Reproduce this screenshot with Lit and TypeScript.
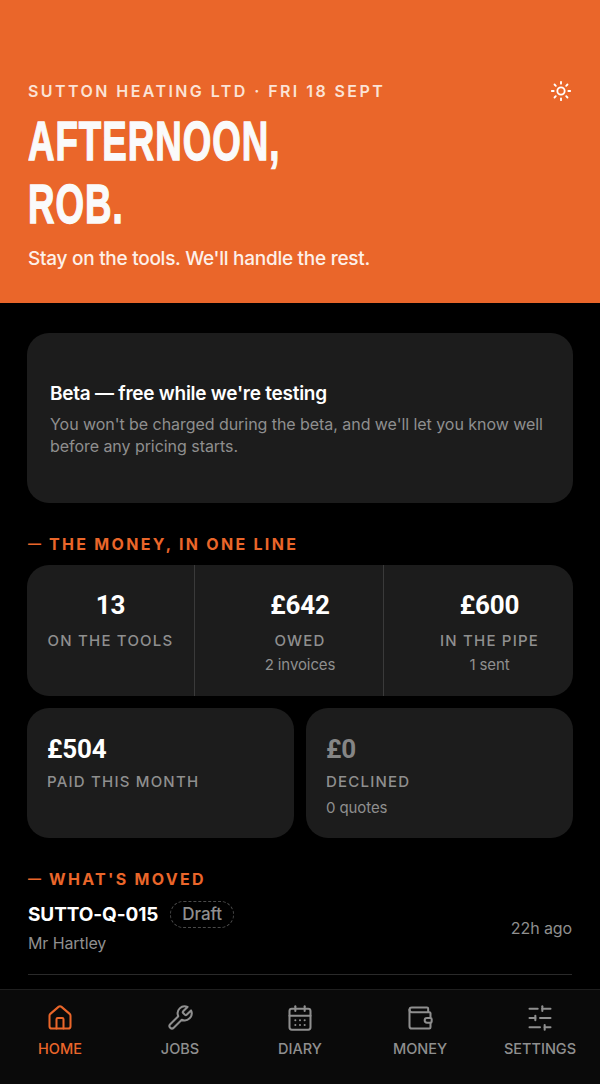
import { LitElement, html, css, svg } from "lit";
import { customElement } from "lit/decorators.js";

const icon = (p: unknown) => html`<svg class="ic" viewBox="0 0 24 24" fill="none" stroke="currentColor" stroke-width="2" stroke-linecap="round" stroke-linejoin="round">${p}</svg>`;

const home = svg`<path d="M15 21v-8a1 1 0 0 0-1-1h-4a1 1 0 0 0-1 1v8"/><path d="M3 10a2 2 0 0 1 .71-1.53l7-6a2 2 0 0 1 2.58 0l7 6A2 2 0 0 1 21 10v9a2 2 0 0 1-2 2H5a2 2 0 0 1-2-2z"/>`;
const wrench = svg`<path d="M14.7 6.3a1 1 0 0 0 0 1.4l1.6 1.6a1 1 0 0 0 1.4 0l3.77-3.77a6 6 0 0 1-7.94 7.94l-6.91 6.91a2.12 2.12 0 0 1-3-3l6.91-6.91a6 6 0 0 1 7.94-7.94l-3.76 3.76z"/>`;
const cal = svg`<path d="M8 2v4"/><path d="M16 2v4"/><rect width="18" height="18" x="3" y="4" rx="2"/><path d="M3 10h18"/><path d="M8 14h.01"/><path d="M12 14h.01"/><path d="M16 14h.01"/><path d="M8 18h.01"/><path d="M12 18h.01"/><path d="M16 18h.01"/>`;
const wallet = svg`<path d="M19 7V4a1 1 0 0 0-1-1H5a2 2 0 0 0 0 4h15a1 1 0 0 1 1 1v4h-3a2 2 0 0 0 0 4h3a1 1 0 0 0 1-1v-2a1 1 0 0 0-1-1"/><path d="M3 5v14a2 2 0 0 0 2 2h15a1 1 0 0 0 1-1v-4"/>`;
const sliders = svg`<line x1="21" x2="14" y1="4" y2="4"/><line x1="10" x2="3" y1="4" y2="4"/><line x1="21" x2="12" y1="12" y2="12"/><line x1="8" x2="3" y1="12" y2="12"/><line x1="21" x2="16" y1="20" y2="20"/><line x1="12" x2="3" y1="20" y2="20"/><line x1="14" x2="14" y1="2" y2="6"/><line x1="8" x2="8" y1="10" y2="14"/><line x1="16" x2="16" y1="18" y2="22"/>`;
const sun = svg`<circle cx="12" cy="12" r="4"/><path d="M12 2v2"/><path d="M12 20v2"/><path d="m4.93 4.93 1.41 1.41"/><path d="m17.66 17.66 1.41 1.41"/><path d="M2 12h2"/><path d="M20 12h2"/><path d="m6.34 17.66-1.41 1.41"/><path d="m19.07 4.93-1.41 1.41"/>`;

@customElement("app-root")
export class AppRoot extends LitElement {
  static styles = css`
    :host { display: block; width: 600px; height: 1084px; background: #000; overflow: hidden; position: relative; font-family: Inter, "Noto Sans", sans-serif; color: #fff; }
    .hero { background: #ea662a; height: 303px; box-sizing: border-box; padding: 80px 28px 0; }
    .top { display: flex; justify-content: space-between; align-items: center; height: 22px; }
    .eyebrow { font-size: 16px; font-weight: 600; letter-spacing: 2.43px; color: #fbe3d6; white-space: nowrap; }
    .sun { width: 22px; height: 22px; color: #fff; display: flex; }
    .sun .ic { width: 22px; height: 22px; }
    h1 { margin: 0; padding-top: 7px; font-family: "Liberation Sans", sans-serif; font-weight: 700; font-size: 56px; line-height: 63px; letter-spacing: 1.5px; color: #fafafa; transform: scaleX(.655); transform-origin: left; -webkit-text-stroke: 1.4px #fafafa; stroke-linejoin: miter; white-space: nowrap; }
    .sub { margin-top: 11px; font-size: 19px; line-height: 26px; font-weight: 500; color: #fdf0e9; letter-spacing: -.27px; }
    main { padding: 30px 27px 0 27px; }
    .card { background: #1c1c1c; border-radius: 22px; }
    .beta { height: 170px; box-sizing: border-box; padding: 48px 23px 0; }
    .beta h2 { margin: 0; font-size: 19px; line-height: 26px; font-weight: 600; letter-spacing: -.25px; }
    .beta p { margin: 6px 0 0; font-size: 16px; line-height: 22px; color: #8f8f8f; letter-spacing: -.05px; }
    .label { font-size: 16px; font-weight: 700; letter-spacing: 2.3px; color: #ea662a; line-height: 20px; padding-left: 1px; }
    .dash { font-size: 13px; line-height: 1; letter-spacing: 8px; vertical-align: 2px; }
    .l1 { margin-top: 31px; }
    .three { margin-top: 11px; height: 131px; display: grid; grid-template-columns: 167px 1fr 190px; }
    .cell { display: flex; flex-direction: column; align-items: center; padding-top: 24px; box-sizing: border-box; }
    .cell + .cell { border-left: 1px solid #3a3a3a; padding-left: 22px; }
    .num { font-family: Roboto, Inter, sans-serif; font-size: 26px; line-height: 32px; font-weight: 700; letter-spacing: -.2px; }
    .cap { margin-top: 10px; font-size: 15px; line-height: 20px; font-weight: 500; letter-spacing: 1.2px; color: #8f8f8f; }
    .note { margin-top: 4px; font-size: 15px; line-height: 20px; color: #8f8f8f; letter-spacing: -.1px; }
    .two { margin-top: 12px; display: grid; grid-template-columns: 1fr 1fr; gap: 12px; }
    .two .card { height: 130px; box-sizing: border-box; padding: 25px 20px 0; display: flex; flex-direction: column; align-items: flex-start; }
    .two .cap { margin-top: 7px; }
    .two .note { margin-top: 6px; }
    .dim { color: #858585; }
    .l2 { margin-top: 31px; }
    .row { margin: 12px 1px 0; height: 74px; box-sizing: border-box; border-bottom: 1px solid #2a2a2a; display: flex; justify-content: space-between; }
    .id { display: flex; align-items: center; gap: 12px; height: 27px; font-size: 19px; font-weight: 700; letter-spacing: -.1px; }
    .chip { font-size: 17px; font-weight: 500; color: #8f8f8f; border: 1px dashed #4a4a4a; border-radius: 14px; padding: 0 11px; line-height: 25px; }
    .who { margin-top: 4px; font-size: 16px; line-height: 22px; color: #8f8f8f; letter-spacing: -.1px; }
    .ago { font-size: 16px; color: #8f8f8f; line-height: 20px; margin-top: 17px; letter-spacing: -.1px; }
    nav { position: absolute; left: 0; right: 0; bottom: 0; height: 95px; box-sizing: border-box; background: #0a0a0a; border-top: 1px solid #1f1f1f; display: grid; grid-template-columns: repeat(5, 1fr); }
    .tab { display: flex; flex-direction: column; align-items: center; padding-top: 14px; color: #8f8f8f; font-size: 14.5px; font-weight: 500; }
    .tab .ic { width: 28px; height: 28px; stroke-width: 1.75; }
    .tab span { margin-top: 8px; line-height: 18px; }
    .on { color: #ea662a; }
  `;

  render() {
    const tabs: [string, unknown, boolean][] = [["HOME", home, true], ["JOBS", wrench, false], ["DIARY", cal, false], ["MONEY", wallet, false], ["SETTINGS", sliders, false]];
    return html`
      <section class="hero">
        <div class="top"><div class="eyebrow">SUTTON HEATING LTD · FRI 18 SEPT</div><div class="sun">${icon(sun)}</div></div>
        <h1>AFTERNOON,<br />ROB.</h1>
        <div class="sub">Stay on the tools. We'll handle the rest.</div>
      </section>
      <main>
        <div class="card beta">
          <h2>Beta — free while we're testing</h2>
          <p>You won't be charged during the beta, and we'll let you know well before any pricing starts.</p>
        </div>
        <div class="label l1"><span class="dash">—</span>THE MONEY, IN ONE LINE</div>
        <div class="card three">
          <div class="cell"><div class="num">13</div><div class="cap">ON THE TOOLS</div></div>
          <div class="cell"><div class="num">£642</div><div class="cap">OWED</div><div class="note">2 invoices</div></div>
          <div class="cell"><div class="num">£600</div><div class="cap">IN THE PIPE</div><div class="note">1 sent</div></div>
        </div>
        <div class="two">
          <div class="card"><div class="num">£504</div><div class="cap">PAID THIS MONTH</div></div>
          <div class="card"><div class="num dim">£0</div><div class="cap">DECLINED</div><div class="note">0 quotes</div></div>
        </div>
        <div class="label l2"><span class="dash">—</span>WHAT'S MOVED</div>
        <div class="row">
          <div>
            <div class="id">SUTTO-Q-015 <span class="chip">Draft</span></div>
            <div class="who">Mr Hartley</div>
          </div>
          <div class="ago">22h ago</div>
        </div>
      </main>
      <nav>
        ${tabs.map(([t, p, on]) => html`<div class="tab ${on ? "on" : ""}">${icon(p)}<span>${t}</span></div>`)}
      </nav>
    `;
  }
}
